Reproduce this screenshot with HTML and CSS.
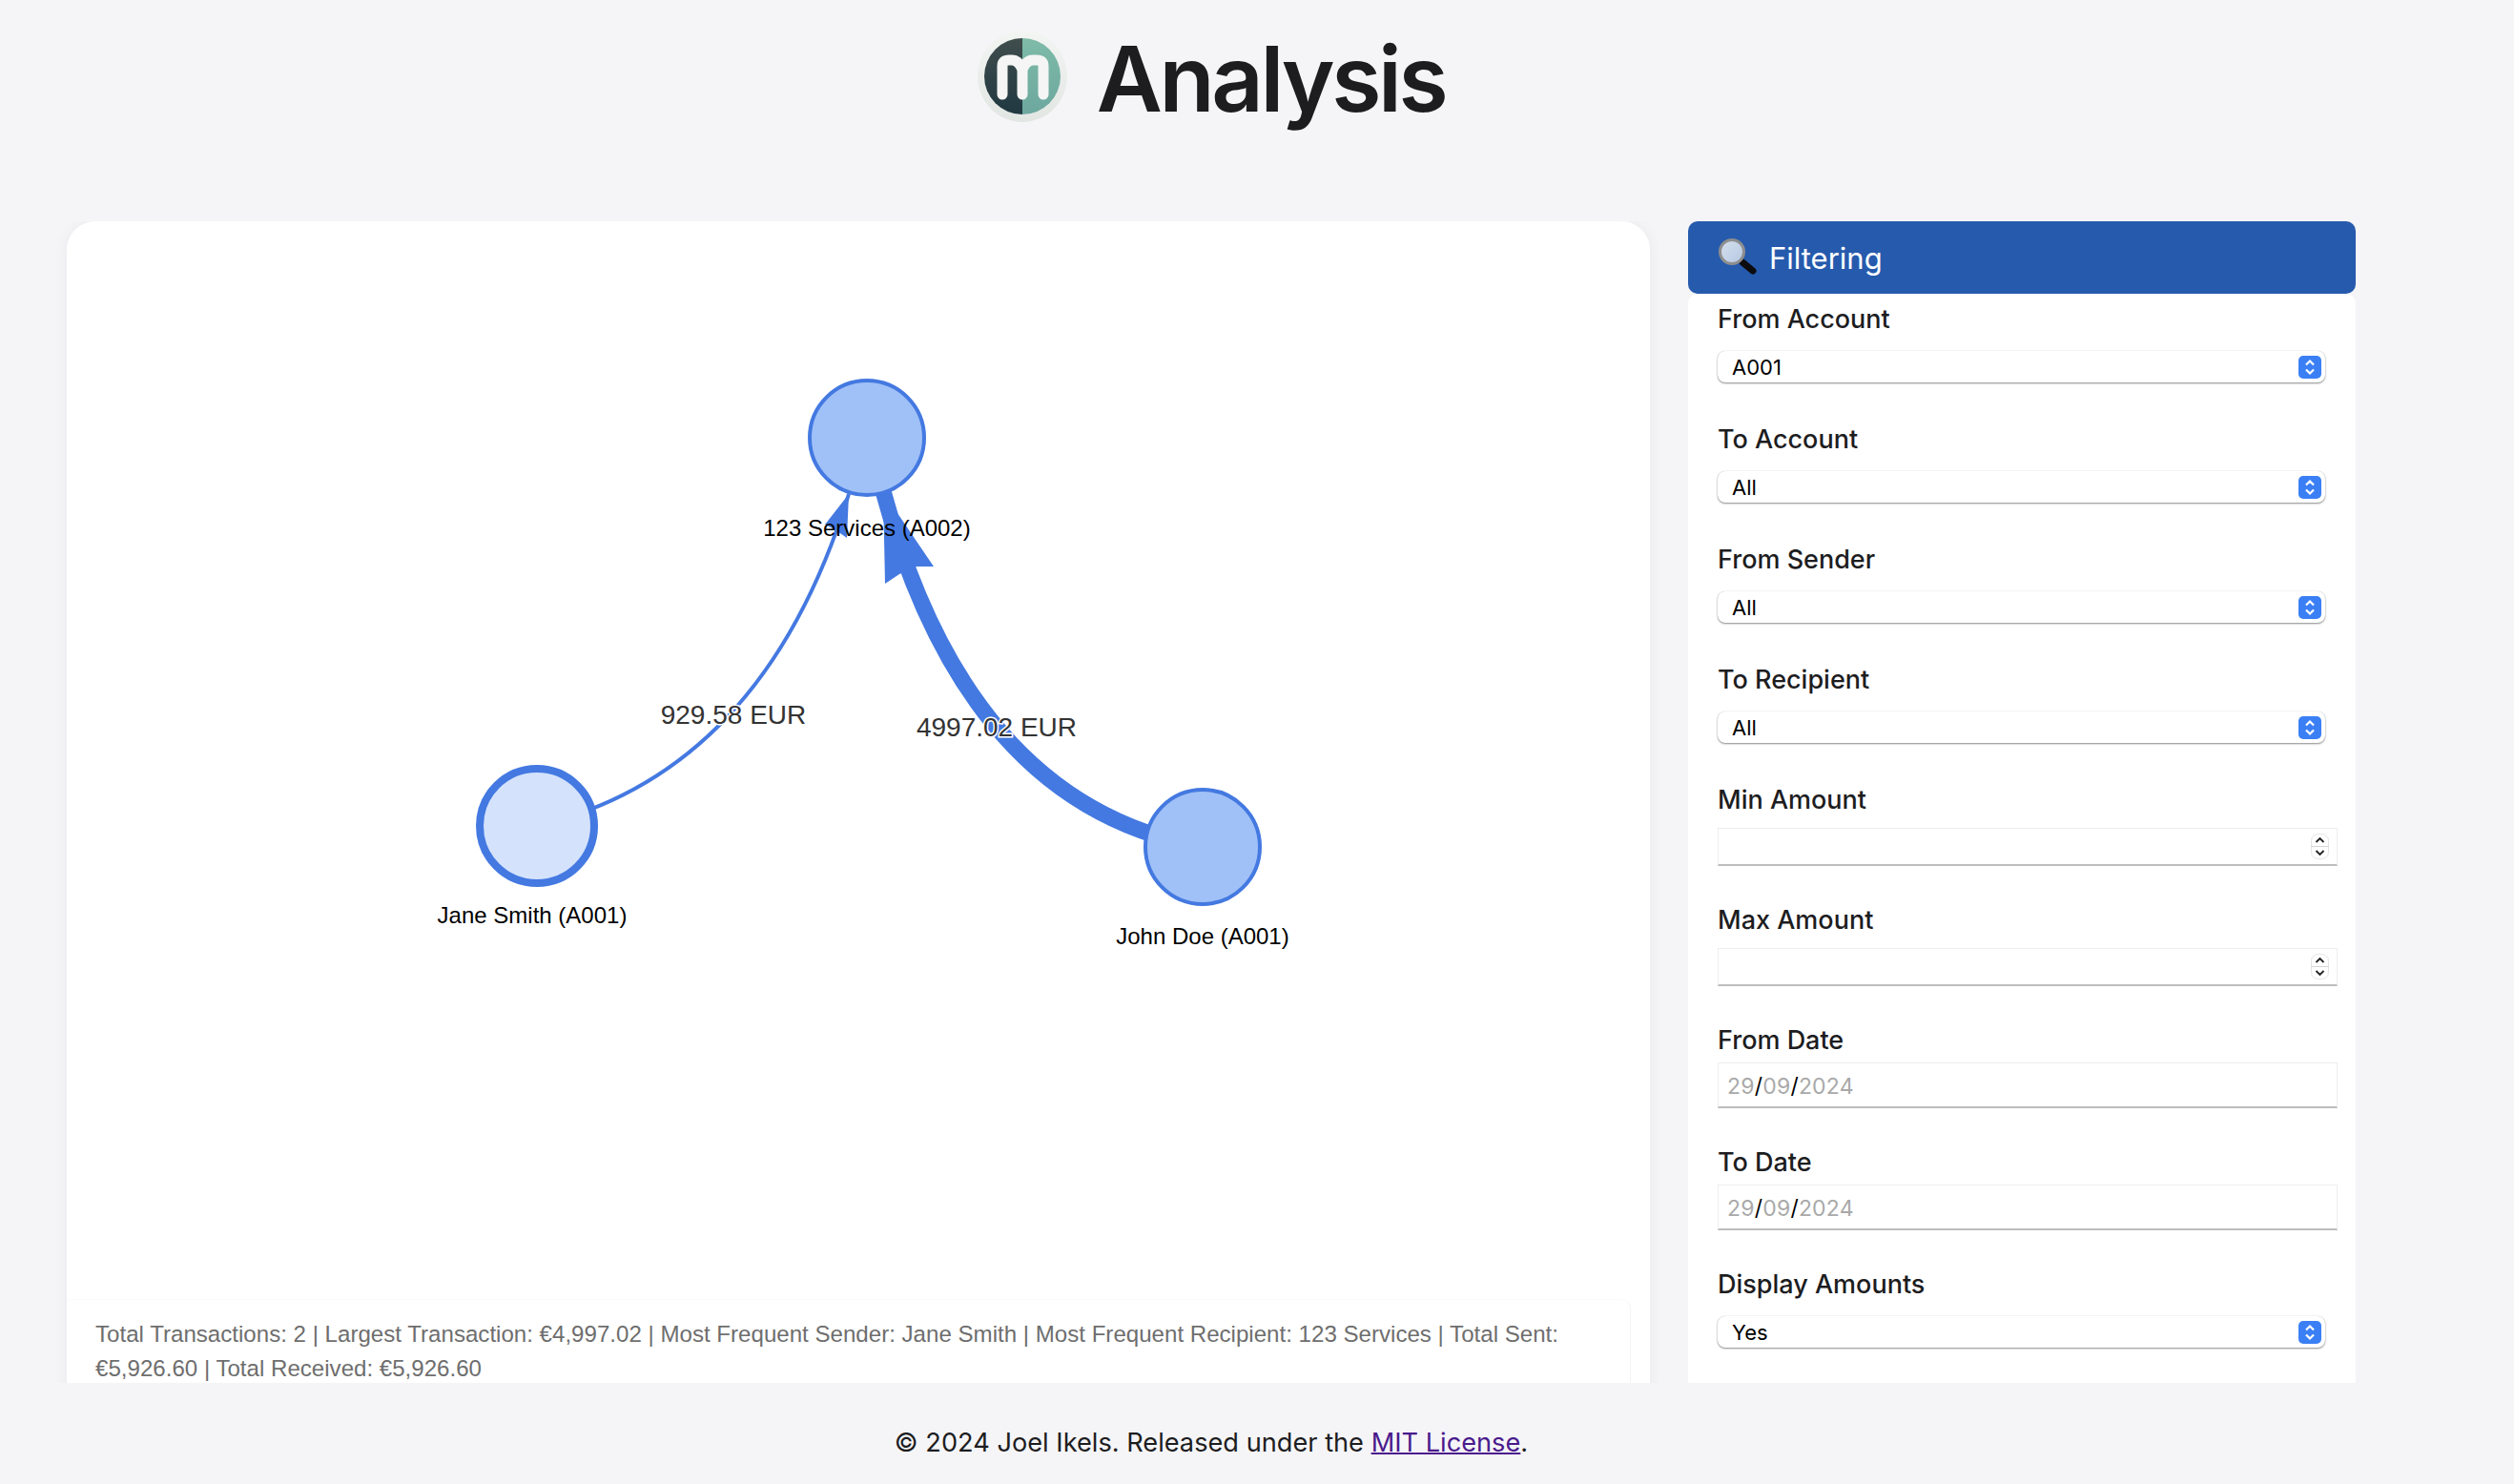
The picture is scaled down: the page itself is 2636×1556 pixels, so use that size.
FILE: index.html
```html
<!DOCTYPE html>
<html lang="en">
<head>
    <meta charset="UTF-8">
    <meta name="viewport" content="width=device-width, initial-scale=1.0">
    <title>Analysis</title>
    <link rel="stylesheet" href="styles.css">
</head>
<body>
    <div class="page">
        <header class="page-header">
            <svg class="logo" viewBox="0 0 94 96" aria-hidden="true">
                <defs>
                    <linearGradient id="logoRing" x1="0" y1="0" x2="0" y2="1">
                        <stop offset="0" stop-color="#f3f5f3"/>
                        <stop offset="1" stop-color="#e2e6e3"/>
                    </linearGradient>
                    <linearGradient id="logoDark" x1="0" y1="0" x2="0" y2="1">
                        <stop offset="0" stop-color="#434f4e"/>
                        <stop offset="1" stop-color="#1d3640"/>
                    </linearGradient>
                    <linearGradient id="logoLight" x1="0" y1="0" x2="0" y2="1">
                        <stop offset="0" stop-color="#80bda8"/>
                        <stop offset="1" stop-color="#6ba59e"/>
                    </linearGradient>
                    <clipPath id="logoDisk"><circle cx="47" cy="48" r="40"/></clipPath>
                </defs>
                <ellipse cx="47" cy="48" rx="47" ry="48" fill="url(#logoRing)"/>
                <g clip-path="url(#logoDisk)">
                    <rect x="0" y="0" width="47" height="96" fill="url(#logoDark)"/>
                    <rect x="47" y="0" width="47" height="96" fill="url(#logoLight)"/>
                </g>
                <path d="M26 67V37Q26 31 33 31H36Q43 31 47 41Q51 31 58 31H62Q69 31 69 37V67M47 41V67" fill="none" stroke="#f4f5f4" stroke-width="11" stroke-linecap="round" stroke-linejoin="round"/>
            </svg>
            <h1>Analysis</h1>
        </header>

        <main class="columns">
            <section class="graph-card">
                <svg class="graph" viewBox="70 232 1660 1130" role="img" aria-label="Transaction graph">
                    <path class="edge" d="M563 866Q800 810 890 518" stroke-width="4"/>
                    <polygon class="arrow" points="890,518 888,564 875,555 865,550"/>
                    <path class="edge" d="M1261 888Q1015 845 926 515" stroke-width="17"/>
                    <polygon class="arrow" points="926,516 979,594 961,594 943,602 928,612"/>

                    <circle class="node" cx="909" cy="459" r="60"/>
                    <circle class="node" cx="1261" cy="888" r="60"/>
                    <circle class="node node-selected" cx="563" cy="866" r="60"/>

                    <text class="node-label" x="909" y="562">123 Services (A002)</text>
                    <text class="node-label" x="558" y="968">Jane Smith (A001)</text>
                    <text class="node-label" x="1261" y="990">John Doe (A001)</text>
                    <text class="edge-label" x="769" y="759">929.58 EUR</text>
                    <text class="edge-label" x="1045" y="772">4997.02 EUR</text>
                </svg>
                <p class="stats">Total Transactions: 2 | Largest Transaction: €4,997.02 | Most Frequent Sender: Jane Smith | Most Frequent Recipient: 123 Services | Total Sent: €5,926.60 | Total Received: €5,926.60</p>
            </section>

            <aside class="filters">
                <div class="filters-title">
                    <svg class="search-icon" viewBox="0 0 42 40" aria-hidden="true">
                        <defs>
                            <linearGradient id="lens" x1="0" y1="0" x2="1" y2="1">
                                <stop offset="0" stop-color="#d6e0ee"/>
                                <stop offset="1" stop-color="#b5c7e2"/>
                            </linearGradient>
                        </defs>
                        <line x1="27" y1="25" x2="38" y2="34" stroke="#0c0c0e" stroke-width="7" stroke-linecap="round"/>
                        <circle cx="16" cy="14" r="12.500" fill="url(#lens)" stroke="#8d8e8e" stroke-width="3"/>
                    </svg>
                    <span>Filtering</span>
                </div>
                <form class="filters-body">
                    <div class="field field-select">
                        <label for="fromAccount">From Account</label>
                        <select id="fromAccount"><option>A001</option></select>
                    </div>
                    <div class="field field-select">
                        <label for="toAccount">To Account</label>
                        <select id="toAccount"><option>All</option></select>
                    </div>
                    <div class="field field-select">
                        <label for="fromSender">From Sender</label>
                        <select id="fromSender"><option>All</option></select>
                    </div>
                    <div class="field field-select">
                        <label for="toRecipient">To Recipient</label>
                        <select id="toRecipient"><option>All</option></select>
                    </div>
                    <div class="field field-number">
                        <label for="minAmount">Min Amount</label>
                        <input id="minAmount" type="text">
                    </div>
                    <div class="field field-number">
                        <label for="maxAmount">Max Amount</label>
                        <input id="maxAmount" type="text">
                    </div>
                    <div class="field field-date">
                        <label>From Date</label>
                        <div class="date-input"><span>29</span>/<span>09</span>/<span>2024</span></div>
                    </div>
                    <div class="field field-date">
                        <label>To Date</label>
                        <div class="date-input"><span>29</span>/<span>09</span>/<span>2024</span></div>
                    </div>
                    <div class="field field-select">
                        <label for="displayAmounts">Display Amounts</label>
                        <select id="displayAmounts"><option>Yes</option></select>
                    </div>
                </form>
            </aside>
        </main>

        <footer class="page-footer">© 2024 Joel Ikels. Released under the <a href="#">MIT License</a>.</footer>
    </div>
</body>
</html>
```

FILE: styles.css
```css
* {
    box-sizing: border-box;
}
body {
    margin: 0;
    background-color: #f5f5f7;
    color: #1d1d1f;
    font-family: Inter, "Liberation Sans", sans-serif;
}
.page {
    width: 2540px;
    height: 1556px;
    overflow: hidden;
}
.page-header {
    display: flex;
    justify-content: center;
    align-items: center;
    gap: 31px;
    height: 232px;
    padding-bottom: 72px;
}
.logo {
    width: 94px;
    height: 96px;
}
h1 {
    margin: 0;
    padding-top: 4px;
    font-size: 95px;
    font-weight: 600;
    letter-spacing: -3.4px;
    line-height: 1;
}
.columns {
    display: flex;
    gap: 40px;
    height: 1218px;
    padding: 0 70px;
    overflow: hidden;
}
.graph-card {
    width: 1660px;
    flex: none;
    height: 1260px;
    background-color: #fff;
    border-radius: 30px;
    box-shadow: 0 0 16px rgba(0, 0, 0, 0.05);
}
.graph {
    display: block;
    width: 1660px;
    height: 1130px;
}
.edge {
    fill: none;
    stroke: #4479e1;
}
.arrow {
    fill: #4479e1;
}
.node {
    fill: #a0c1f7;
    stroke: #4479e1;
    stroke-width: 4;
}
.node-selected {
    fill: #d4e2fc;
    stroke-width: 8;
}
.node-label {
    font-family: "Liberation Sans", sans-serif;
    font-size: 24px;
    text-anchor: middle;
    fill: #000;
}
.edge-label {
    font-family: "Liberation Sans", sans-serif;
    font-size: 28px;
    text-anchor: middle;
    fill: #333;
    stroke: #fff;
    stroke-width: 3px;
    paint-order: stroke;
}
.stats {
    width: 1640px;
    margin: 0;
    padding: 18px 20px 0 30px;
    border-top: 1px solid #fbfbfb;
    border-right: 1px solid #f4f4f4;
    border-top-right-radius: 10px;
    color: #6e6e6e;
    font-family: "Liberation Sans", sans-serif;
    font-size: 24.1px;
    line-height: 36px;
}
.filters {
    width: 700px;
    flex: none;
}
.filters-title {
    display: flex;
    align-items: center;
    gap: 13px;
    height: 76px;
    padding-left: 30px;
    background-color: #265aad;
    border-radius: 10px;
    color: #fff;
    font-size: 31px;
    font-weight: 400;
}
.search-icon {
    width: 42px;
    height: 40px;
}
.filters-body {
    height: 1200px;
    padding: 11px 19px 0 31px;
    background-color: #fff;
    border-radius: 10px 10px 0 0;
}
.field label {
    display: block;
    height: 32px;
    font-size: 27px;
    font-weight: 500;
    line-height: 32px;
}
.field-select {
    height: 126px;
}
.field-number {
    height: 126px;
}
.field-date {
    height: 128px;
}
select {
    appearance: none;
    display: block;
    width: 637px;
    height: 33px;
    margin-top: 17px;
    padding: 0 0 0 15px;
    border: none;
    border-radius: 8px;
    background: #fff url("data:image/svg+xml,%3Csvg xmlns='http://www.w3.org/2000/svg' width='24' height='24'%3E%3Crect width='24' height='24' rx='5' fill='%233b7ff5'/%3E%3Cpath d='M8 9.500L12 5.500L16 9.500M8 14.500L12 18.500L16 14.500' fill='none' stroke='white' stroke-width='2.200'/%3E%3C/svg%3E") no-repeat right 4px center;
    box-shadow: 0 1px 2px rgba(0, 0, 0, 0.45), 0 0 1px rgba(0, 0, 0, 0.2);
    color: #000;
    font-family: Inter, "Liberation Sans", sans-serif;
    font-size: 22px;
}
input {
    display: block;
    width: 650px;
    height: 40px;
    margin-top: 13px;
    border: 1px solid #eeeeee;
    border-bottom: 2px solid #bdbdbd;
    background: #fff url("data:image/svg+xml,%3Csvg xmlns='http://www.w3.org/2000/svg' width='19' height='27'%3E%3Crect x='.5' y='.5' width='18' height='26' rx='7' fill='white' stroke='%23e4e4e4'/%3E%3Cpath d='M0 13.500H19' stroke='%23d6d6d6'/%3E%3Cpath d='M5.500 9L9.500 5L13.500 9M5.500 18L9.500 22L13.500 18' fill='none' stroke='%23222' stroke-width='1.800'/%3E%3C/svg%3E") no-repeat right 8px center;
}
.date-input {
    width: 650px;
    height: 48px;
    margin-top: 7px;
    padding-left: 9px;
    border: 1px solid #eeeeee;
    border-bottom: 2px solid #bdbdbd;
    background-color: #fff;
    color: #000;
    font-size: 23px;
    letter-spacing: 0.2px;
    line-height: 49px;
}
.date-input span {
    color: #a9a9a9;
}
.page-footer {
    height: 106px;
    padding-top: 46px;
    font-size: 27.2px;
    line-height: 34px;
    text-align: center;
}
.page-footer a {
    color: #4a1a8c;
    text-decoration-thickness: 2px;
}
```
